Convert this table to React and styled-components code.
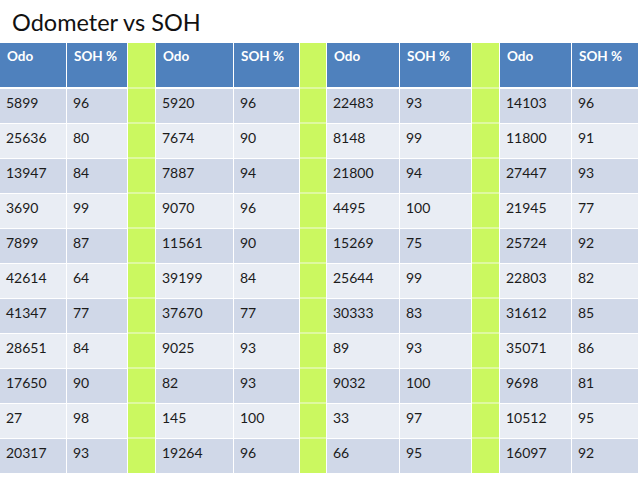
import styled, { createGlobalStyle } from 'styled-components';

const GlobalStyle = createGlobalStyle`
  html, body {
    margin: 0;
    padding: 0;
    background: #ffffff;
  }
  body {
    font-family: Lato, 'Open Sans', 'Liberation Sans', sans-serif;
  }
`;

const COLS = '66px 60px 27px 77px 65px 26px 72px 71px 27px 71px 66px';

const rows = [
  ['5899', '96', '5920', '96', '22483', '93', '14103', '96'],
  ['25636', '80', '7674', '90', '8148', '99', '11800', '91'],
  ['13947', '84', '7887', '94', '21800', '94', '27447', '93'],
  ['3690', '99', '9070', '96', '4495', '100', '21945', '77'],
  ['7899', '87', '11561', '90', '15269', '75', '25724', '92'],
  ['42614', '64', '39199', '84', '25644', '99', '22803', '82'],
  ['41347', '77', '37670', '77', '30333', '83', '31612', '85'],
  ['28651', '84', '9025', '93', '89', '93', '35071', '86'],
  ['17650', '90', '82', '93', '9032', '100', '9698', '81'],
  ['27', '98', '145', '100', '33', '97', '10512', '95'],
  ['20317', '93', '19264', '96', '66', '95', '16097', '92'],
];

const SPage = styled.div`
  width: 638px;
  height: 479px;
  overflow: hidden;
  background: #ffffff;
`;

const STitle = styled.h1`
  margin: 0;
  height: 43px;
  box-sizing: border-box;
  padding: 8px 0 0 12px;
  font-size: 23.5px;
  line-height: 28px;
  font-weight: 400;
  color: #111111;
`;

const STable = styled.div`
  display: flex;
  flex-direction: column;
  gap: 1px;
  background: #ffffff;
`;

const SRow = styled.div`
  display: grid;
  grid-template-columns: ${COLS};
  column-gap: 1px;
  height: ${(p) => (p.$header ? '44px' : '34px')};
  margin-bottom: ${(p) => (p.$header ? '1px' : '0')};
`;

const SCell = styled.div`
  box-sizing: border-box;
  padding: ${(p) => (p.$header ? '5px 0 0 7px' : '6px 0 0 6px')};
  font-size: ${(p) => (p.$header ? '13.5px' : '14px')};
  line-height: 16px;
  font-weight: ${(p) => (p.$header ? 700 : 400)};
  color: ${(p) => (p.$header ? '#ffffff' : '#1b1b1b')};
  background: ${(p) =>
    p.$header ? '#4f81bd' : p.$shade ? '#d0d8e8' : '#e9edf4'};
  white-space: nowrap;
`;

const SSpacer = styled.div`
  background: #cbf860;
  box-shadow: ${(p) => (p.$first ? 'none' : '0 -2px 0 #def9a0')};
`;

function Group({ values, header, shade, first, last }) {
  return (
    <>
      <SCell $header={header} $shade={shade}>
        {values[0]}
      </SCell>
      <SCell $header={header} $shade={shade}>
        {values[1]}
      </SCell>
      {!last && <SSpacer $first={first} />}
    </>
  );
}

function App() {
  const groups = [0, 1, 2, 3];
  return (
    <SPage>
      <GlobalStyle />
      <STitle>Odometer vs SOH</STitle>
      <STable>
        <SRow $header>
          {groups.map((g) => (
            <Group
              key={g}
              header
              first
              last={g === 3}
              values={['Odo', 'SOH %']}
            />
          ))}
        </SRow>
        {rows.map((r, i) => (
          <SRow key={i}>
            {groups.map((g) => (
              <Group
                key={g}
                shade={i % 2 === 0}
                last={g === 3}
                values={[r[g * 2], r[g * 2 + 1]]}
              />
            ))}
          </SRow>
        ))}
      </STable>
    </SPage>
  );
}

export default App;
